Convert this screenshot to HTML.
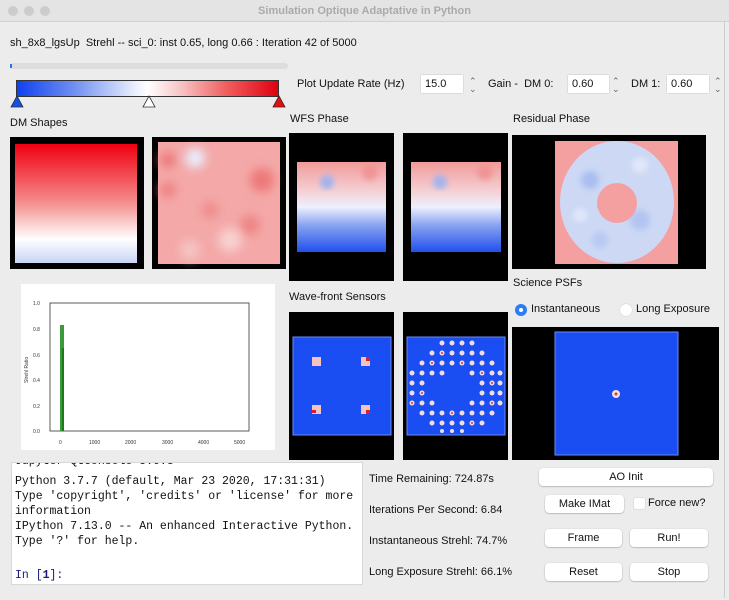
<!DOCTYPE html>
<html><head><meta charset="utf-8"><style>
*{margin:0;padding:0;box-sizing:border-box}
body{width:729px;height:600px;background:#ececec;font-family:"Liberation Sans",sans-serif;font-size:11px;color:#111;position:relative;overflow:hidden}
.a{position:absolute}
.btn{position:absolute;background:#fff;border-radius:4px;box-shadow:0 0.5px 1.5px rgba(0,0,0,.35);text-align:center;font-size:11px;line-height:18px}
.inp{position:absolute;background:#fff;height:18px;font-size:11px;line-height:18px;padding-left:4px;box-shadow:0 0 1px #999}
.spin{position:absolute;font-size:9px;color:#666;line-height:8px}
.mono{font-family:"Liberation Mono",monospace;font-size:11.5px;position:absolute;left:14px;white-space:pre}
</style></head><body>
<div class="a" style="left:0;top:0;width:729px;height:22px;background:#e4e4e4;border-bottom:1px solid #d0d0d0"></div>
<div class="a" style="left:8px;top:6px;width:10px;height:10px;border-radius:50%;background:#ccc"></div>
<div class="a" style="left:24px;top:6px;width:10px;height:10px;border-radius:50%;background:#ccc"></div>
<div class="a" style="left:40px;top:6px;width:10px;height:10px;border-radius:50%;background:#ccc"></div>
<div class="a" style="left:0;top:5px;width:729px;text-align:center;color:#aaa;font-weight:bold;font-size:11px">Simulation Optique Adaptative in Python</div>
<div class="a" style="right:4px;top:22px;width:1px;height:576px;background:#ccc"></div>

<div class="a" style="left:10px;top:37px;font-size:11px">sh_8x8_lgsUp&nbsp; Strehl -- sci_0: inst 0.65, long 0.66 : Iteration 42 of 5000</div>
<div class="a" style="left:10px;top:63px;width:278px;height:6px;background:#ddd;border-radius:3px"></div>
<div class="a" style="left:10px;top:64px;width:2px;height:4px;background:#2a6ff0"></div>
<div class="a" style="left:16px;top:80px;width:263px;height:17px;border:1px solid #333;background:linear-gradient(90deg,#1040f0,#7090f0 22%,#e8eefc 45%,#fff 50%,#f8c8c8 62%,#f06060 80%,#e00010)"></div>
<svg class="a" style="left:8px;top:94px" width="280" height="16">
<polygon points="9,2 3,13 15,13" fill="#1a4de0" stroke="#234" stroke-width="0.8"/>
<polygon points="141,2 135,13 147,13" fill="#fff" stroke="#333" stroke-width="0.8"/>
<polygon points="271,2 265,13 277,13" fill="#e01010" stroke="#422" stroke-width="0.8"/>
</svg>
<div class="a" style="left:297px;top:78px">Plot Update Rate (Hz)</div>
<div class="inp" style="left:421px;top:75px;width:42px">15.0</div>
<div class="spin" style="left:469px;top:77px">⌃<br>⌄</div>
<div class="a" style="left:488px;top:78px">Gain -&nbsp; DM 0:</div>
<div class="inp" style="left:568px;top:75px;width:41px">0.60</div>
<div class="spin" style="left:612px;top:77px">⌃<br>⌄</div>
<div class="a" style="left:631px;top:78px">DM 1:</div>
<div class="inp" style="left:667px;top:75px;width:42px">0.60</div>
<div class="spin" style="left:714px;top:77px">⌃<br>⌄</div>

<div class="a" style="left:10px;top:117px">DM Shapes</div>
<div class="a" style="left:290px;top:113px">WFS Phase</div>
<div class="a" style="left:513px;top:113px">Residual Phase</div>

<svg class="a" style="left:0;top:0" width="729" height="600">
<defs>
<linearGradient id="g1" x1="0" y1="0" x2="0" y2="1"><stop offset="0" stop-color="#f00010"/><stop offset=".5" stop-color="#f59090"/><stop offset=".8" stop-color="#fff"/><stop offset="1" stop-color="#c8d4f4"/></linearGradient>
<linearGradient id="g3" x1="0" y1="0" x2="0" y2="1"><stop offset="0" stop-color="#f29a9a"/><stop offset=".3" stop-color="#f4ccd0"/><stop offset=".5" stop-color="#eef0fc"/><stop offset=".7" stop-color="#8aa4f0"/><stop offset="1" stop-color="#2050ec"/></linearGradient>
<filter id="bl"><feGaussianBlur stdDeviation="5"/></filter>
<filter id="bl2"><feGaussianBlur stdDeviation="3"/></filter>
</defs>
<rect x="10" y="137" width="134" height="132" fill="#000"/>
<rect x="15" y="144" width="122" height="119" fill="url(#g1)"/>
<rect x="152" y="137" width="134" height="132" fill="#000"/>
<rect x="158" y="142" width="122" height="122" fill="#f4a8a8"/>
<g filter="url(#bl)"><circle cx="168" cy="160" r="8" fill="#ec7878"/><circle cx="195" cy="158" r="10" fill="#e8eefc"/><circle cx="168" cy="190" r="8" fill="#ee8080"/><circle cx="262" cy="180" r="12" fill="#ee7878"/><circle cx="230" cy="240" r="12" fill="#f8d0d0"/><circle cx="210" cy="210" r="8" fill="#ec8888"/><circle cx="250" cy="225" r="10" fill="#ee8484"/><circle cx="190" cy="250" r="10" fill="#f6c4c4"/></g>
<rect x="289" y="133" width="105" height="148" fill="#000"/>
<rect x="297" y="162" width="89" height="90" fill="url(#g3)"/>
<rect x="403" y="133" width="105" height="148" fill="#000"/>
<rect x="411" y="162" width="90" height="90" fill="url(#g3)"/>
<g filter="url(#bl2)"><circle cx="327" cy="182" r="7" fill="#a0b4ee"/><circle cx="440" cy="182" r="7" fill="#a0b4ee"/><circle cx="370" cy="172" r="8" fill="#f09494"/><circle cx="485" cy="172" r="8" fill="#f09494"/></g>
<rect x="512" y="135" width="194" height="134" fill="#000"/>
<rect x="555" y="141" width="123" height="123" fill="#f4a0a0"/>
<ellipse cx="617" cy="202" rx="57" ry="61" fill="#ccd8f4"/>
<g filter="url(#bl2)" opacity=".7"><circle cx="590" cy="180" r="9" fill="#9cb4ee"/><circle cx="640" cy="220" r="10" fill="#a8bcf0"/><circle cx="600" cy="240" r="8" fill="#b0c2f2"/><circle cx="640" cy="165" r="8" fill="#e8eefc"/><circle cx="580" cy="215" r="7" fill="#e8eefc"/></g>
<circle cx="617" cy="203" r="20" fill="#f4a0a0"/>

<rect x="21" y="284" width="254" height="166" fill="#fff"/>
<rect x="50" y="303" width="199" height="128" fill="none" stroke="#333" stroke-width="0.8"/>
<rect x="60" y="325" width="4" height="106" fill="#3a9a3a"/>
<rect x="62" y="348" width="2" height="83" fill="#1d7a1d"/>
<g font-family="Liberation Sans" font-size="5" fill="#333">
<text x="33" y="305">1.0</text><text x="33" y="331">0.8</text><text x="33" y="357">0.6</text><text x="33" y="382">0.4</text><text x="33" y="408">0.2</text><text x="33" y="433">0.0</text>
<text x="59" y="444">0</text><text x="89" y="444">1000</text><text x="125" y="444">2000</text><text x="162" y="444">3000</text><text x="198" y="444">4000</text><text x="234" y="444">5000</text>
<text transform="translate(28,383) rotate(-90)">Strehl Ratio</text></g>

<rect x="289" y="312" width="105" height="148" fill="#000"/>
<rect x="293" y="337" width="98" height="98" fill="#1a4ef2" stroke="#6a8cf4"/>
<g fill="#f4c4c4"><rect x="312" y="357" width="9" height="9"/><rect x="361" y="357" width="9" height="9"/><rect x="312" y="405" width="9" height="9"/><rect x="361" y="405" width="9" height="9"/></g>
<g fill="#e02020"><rect x="366" y="357" width="4" height="4"/><rect x="366" y="410" width="4" height="4"/><rect x="312" y="410" width="4" height="3"/></g>
<rect x="403" y="312" width="105" height="148" fill="#000"/>
<rect x="407" y="337" width="98" height="98" fill="#1a4ef2" stroke="#6a8cf4"/>
<g fill="#f2dede">
<circle cx="442" cy="343" r="2.5"/><circle cx="452" cy="343" r="2.5"/><circle cx="462" cy="343" r="2.5"/><circle cx="472" cy="343" r="2.5"/>
<circle cx="432" cy="353" r="2.5"/><circle cx="442" cy="353" r="2.5"/><circle cx="452" cy="353" r="2.5"/><circle cx="462" cy="353" r="2.5"/><circle cx="472" cy="353" r="2.5"/><circle cx="482" cy="353" r="2.5"/>
<circle cx="422" cy="363" r="2.5"/><circle cx="432" cy="363" r="2.5"/><circle cx="442" cy="363" r="2.5"/><circle cx="452" cy="363" r="2.5"/><circle cx="462" cy="363" r="2.5"/><circle cx="472" cy="363" r="2.5"/><circle cx="482" cy="363" r="2.5"/><circle cx="492" cy="363" r="2.5"/>
<circle cx="412" cy="373" r="2.5"/><circle cx="422" cy="373" r="2.5"/><circle cx="432" cy="373" r="2.5"/><circle cx="442" cy="373" r="2.5"/><circle cx="472" cy="373" r="2.5"/><circle cx="482" cy="373" r="2.5"/><circle cx="492" cy="373" r="2.5"/><circle cx="500" cy="373" r="2.5"/>
<circle cx="412" cy="383" r="2.5"/><circle cx="422" cy="383" r="2.5"/><circle cx="482" cy="383" r="2.5"/><circle cx="492" cy="383" r="2.5"/><circle cx="500" cy="383" r="2.5"/>
<circle cx="412" cy="393" r="2.5"/><circle cx="422" cy="393" r="2.5"/><circle cx="482" cy="393" r="2.5"/><circle cx="492" cy="393" r="2.5"/><circle cx="500" cy="393" r="2.5"/>
<circle cx="412" cy="403" r="2.5"/><circle cx="422" cy="403" r="2.5"/><circle cx="432" cy="403" r="2.5"/><circle cx="472" cy="403" r="2.5"/><circle cx="482" cy="403" r="2.5"/><circle cx="492" cy="403" r="2.5"/><circle cx="500" cy="403" r="2.5"/>
<circle cx="422" cy="413" r="2.5"/><circle cx="432" cy="413" r="2.5"/><circle cx="442" cy="413" r="2.5"/><circle cx="452" cy="413" r="2.5"/><circle cx="462" cy="413" r="2.5"/><circle cx="472" cy="413" r="2.5"/><circle cx="482" cy="413" r="2.5"/><circle cx="492" cy="413" r="2.5"/>
<circle cx="432" cy="423" r="2.5"/><circle cx="442" cy="423" r="2.5"/><circle cx="452" cy="423" r="2.5"/><circle cx="462" cy="423" r="2.5"/><circle cx="472" cy="423" r="2.5"/><circle cx="482" cy="423" r="2.5"/>
<circle cx="442" cy="431" r="2"/><circle cx="452" cy="431" r="2"/><circle cx="462" cy="431" r="2"/></g>
<g fill="#e03030"><circle cx="442" cy="353" r="1"/><circle cx="462" cy="363" r="1"/><circle cx="482" cy="373" r="1"/><circle cx="422" cy="393" r="1"/><circle cx="492" cy="403" r="1"/><circle cx="452" cy="413" r="1"/><circle cx="472" cy="423" r="1"/><circle cx="432" cy="363" r="1"/><circle cx="492" cy="383" r="1"/><circle cx="412" cy="403" r="1"/></g>
<rect x="512" y="327" width="207" height="133" fill="#000"/>
<rect x="555" y="332" width="123" height="123" fill="#1a4ef2" stroke="#6a8cf4"/>
<circle cx="616" cy="394" r="4" fill="#f0e0e0"/><circle cx="616" cy="394" r="1.5" fill="#e03030"/>
</svg>

<div class="a" style="left:289px;top:291px">Wave-front Sensors</div>
<div class="a" style="left:513px;top:277px">Science PSFs</div>
<div class="a" style="left:515px;top:304px;width:12px;height:12px;border-radius:50%;background:#2a7ef5"></div>
<div class="a" style="left:519px;top:308px;width:4px;height:4px;border-radius:50%;background:#fff"></div>
<div class="a" style="left:531px;top:303px">Instantaneous</div>
<div class="a" style="left:620px;top:304px;width:12px;height:12px;border-radius:50%;background:#fff;box-shadow:0 0 1px #aaa"></div>
<div class="a" style="left:636px;top:303px">Long Exposure</div>

<div class="a" style="left:11px;top:462px;width:352px;height:123px;background:#fff;border:1px solid #d8d8d8;overflow:hidden">
<div class="mono" style="left:3px;top:-8px">Jupyter QtConsole 5.0.3</div>
<div class="mono" style="left:3px;top:12px">Python 3.7.7 (default, Mar 23 2020, 17:31:31)</div>
<div class="mono" style="left:3px;top:27px">Type 'copyright', 'credits' or 'license' for more</div>
<div class="mono" style="left:3px;top:42px">information</div>
<div class="mono" style="left:3px;top:57px">IPython 7.13.0 -- An enhanced Interactive Python.</div>
<div class="mono" style="left:3px;top:72px">Type '?' for help.</div>
<div class="mono" style="left:3px;top:106px;color:#1a1a80">In [<b>1</b>]:</div>
</div>

<div class="a" style="left:369px;top:473px">Time Remaining: 724.87s</div>
<div class="a" style="left:369px;top:504px">Iterations Per Second: 6.84</div>
<div class="a" style="left:369px;top:535px">Instantaneous Strehl: 74.7%</div>
<div class="a" style="left:369px;top:566px">Long Exposure Strehl: 66.1%</div>
<div class="btn" style="left:539px;top:468px;width:174px">AO Init</div>
<div class="btn" style="left:545px;top:495px;width:79px">Make IMat</div>
<div class="a" style="left:634px;top:498px;width:11px;height:11px;background:#fff;border-radius:2px;box-shadow:0 0 1px #999"></div>
<div class="a" style="left:648px;top:497px">Force new?</div>
<div class="btn" style="left:545px;top:529px;width:77px">Frame</div>
<div class="btn" style="left:630px;top:529px;width:78px">Run!</div>
<div class="btn" style="left:545px;top:563px;width:77px">Reset</div>
<div class="btn" style="left:630px;top:563px;width:78px">Stop</div>
</body></html>
